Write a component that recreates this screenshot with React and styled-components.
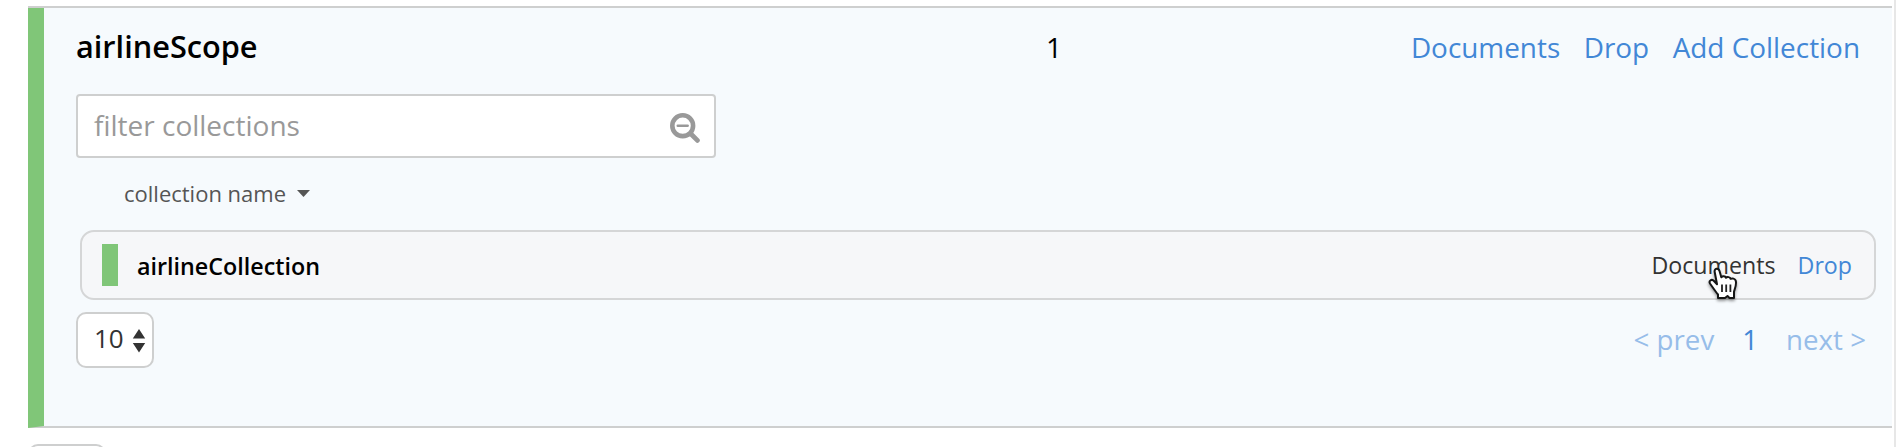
import React from "react";
import styled, { createGlobalStyle } from "styled-components";

const GlobalStyle = createGlobalStyle`
  * { box-sizing: border-box; }
  body {
    margin: 0;
    background: #fff;
    overflow: hidden;
    color: #000;
    font-family: "Open Sans", "Noto Sans", sans-serif;
  }
`;

const Page = styled.main`
  height: 447px;
  padding: 6px 2px 0 28px;
  border-right: 2px solid #e7e7e7;
  overflow: hidden;
`;

const ScopeFrame = styled.section`
  border-top: 2px solid #cecfcf;
`;

const ScopePanel = styled.div`
  height: 420px;
  padding: 0 16px 0 32px;
  background: #f6fafd;
  border-left: 16px solid #80c678;
  border-bottom: 2px solid #cecfcf;
`;

const ScopeHeader = styled.header`
  display: flex;
  align-items: baseline;
  height: 86px;
  padding: 18px 16px 0 0;
`;

const ScopeName = styled.h2`
  width: 970px;
  margin: 0;
  font-size: 30.7px;
  line-height: 40px;
  font-weight: 600;
`;

const ScopeCount = styled.span`
  font-size: 28px;
  line-height: 40px;
`;

const Actions = styled.nav`
  display: flex;
  gap: ${(p) => p.$gap}px;
  margin-left: auto;
`;

const Action = styled.a`
  color: ${(p) => (p.$active ? "#333" : "#4287d6")};
  font-size: ${(p) => p.$size}px;
  line-height: 40px;
  white-space: nowrap;
`;

const FilterBox = styled.label`
  display: flex;
  align-items: center;
  justify-content: space-between;
  width: 640px;
  height: 64px;
  padding: 0 14px 0 16px;
  background: #fff;
  border: 2px solid #cecfcf;
  border-radius: 4px;

  svg {
    margin-top: 3px;
  }
`;

const FilterText = styled.span`
  padding-bottom: 2px;
  color: #999;
  font-size: 28px;
  line-height: 40px;
`;

const ColumnHeading = styled.div`
  display: flex;
  align-items: center;
  gap: 11px;
  height: 72px;
  padding: 0 0 2px 48px;
  color: #555;
  font-size: 22px;
  line-height: 30px;
`;

const CollectionRow = styled.div`
  display: flex;
  align-items: center;
  height: 70px;
  margin-left: 4px;
  padding: 0 22px 0 20px;
  background: #f6f7f9;
  border: 2px solid #d5d6d7;
  border-radius: 14px;
`;

const StatusBar = styled.span`
  width: 16px;
  height: 42px;
  margin-right: 19px;
  background: #80c678;
`;

const CollectionName = styled.span`
  padding-top: 2px;
  font-size: 23.3px;
  line-height: 34px;
  font-weight: 600;
`;

const Hovered = styled.span`
  position: relative;
  display: flex;
`;

const Pointer = styled.svg`
  position: absolute;
  left: 57px;
  top: 22px;
  overflow: visible;
  filter: drop-shadow(0 2px 1.5px rgba(0, 0, 0, 0.4));
`;

const Footer = styled.footer`
  display: flex;
  align-items: center;
  height: 56px;
  margin-top: 12px;
`;

const SizeSelect = styled.div`
  display: flex;
  align-items: center;
  gap: 8px;
  width: 78px;
  height: 56px;
  padding: 0 0 4px 16px;
  background: #fff;
  border: 2px solid #cecfcf;
  border-radius: 10px;
  color: #333;
  font-size: 26px;
  line-height: 36px;

  svg {
    margin-top: 5px;
  }
`;

const Pager = styled.nav`
  display: flex;
  gap: 28px;
  margin-left: auto;
  padding: 0 10px 2px 0;
`;

const PageLink = styled.a`
  color: ${(p) => (p.$current ? "#4287d6" : "#97bde9")};
  font-size: 27.7px;
  line-height: 40px;
`;

const OuterFooter = styled.div`
  padding-top: 16px;
`;

function ZoomOutIcon() {
  return (
    <svg width="30" height="30" viewBox="0 0 30 30" fill="none" stroke="#999" strokeLinecap="round">
      <circle cx="12.7" cy="12.7" r="10.4" strokeWidth="4.6" />
      <path d="M7.7 12.8h10" strokeWidth="2.4" />
      <path d="M21 21l6.4 6.4" strokeWidth="4.8" />
    </svg>
  );
}

function SortArrow() {
  return (
    <svg width="13" height="7" viewBox="0 0 13 7">
      <path d="M0 0h13L6.5 7z" fill="#555" />
    </svg>
  );
}

function Stepper() {
  return (
    <svg width="14" height="24" viewBox="0 0 14 24">
      <path d="M7 0l6.2 9.500h-12.400zM.8 14h12.400L7 23.500z" fill="#333" />
    </svg>
  );
}

function HandPointer() {
  return (
    <Pointer width="32" height="34" viewBox="0 0 32 34">
      <path
        d="M8.500 14.500 6.700 5C6 1.200 10.500.5 11.500 4l1.800 6.300c1.200-1.500 3.900-1.300 4.700.5 1.300-1.300 3.900-.8 4.600 1 1.600-.9 4.300-.2 5 1.600C29 16.800 27 21.500 26 24.500V31h-4.500l-2-2-2.500 2h-7v-3.500C7.500 24.500 4.500 20 2 16.500.5 13.800 3.400 12 5.500 13.500L9 17.300z"
        fill="#fff"
        stroke="#151515"
        strokeWidth="2"
        strokeLinejoin="round"
      />
      <path d="M14 17.500v7.500M18.200 17.500v7.500M22.400 17.500v7.500" stroke="#222" strokeWidth="1.800" />
    </Pointer>
  );
}

export default function App() {
  return (
    <>
      <GlobalStyle />
      <Page>
        <ScopeFrame>
          <ScopePanel>
            <ScopeHeader>
              <ScopeName>airlineScope</ScopeName>
              <ScopeCount>1</ScopeCount>
              <Actions $gap={23.5}>
                <Action $size={27.9}>Documents</Action>
                <Action $size={27.9}>Drop</Action>
                <Action $size={27.9}>Add Collection</Action>
              </Actions>
            </ScopeHeader>
            <FilterBox>
              <FilterText>filter collections</FilterText>
              <ZoomOutIcon />
            </FilterBox>
            <ColumnHeading>
              collection name
              <SortArrow />
            </ColumnHeading>
            <CollectionRow>
              <StatusBar />
              <CollectionName>airlineCollection</CollectionName>
              <Actions $gap={22}>
                <Hovered>
                  <Action $size={23.2} $active>Documents</Action>
                  <HandPointer />
                </Hovered>
                <Action $size={23.2}>Drop</Action>
              </Actions>
            </CollectionRow>
            <Footer>
              <SizeSelect>
                10
                <Stepper />
              </SizeSelect>
              <Pager>
                <PageLink>&lt; prev</PageLink>
                <PageLink $current>1</PageLink>
                <PageLink>next &gt;</PageLink>
              </Pager>
            </Footer>
          </ScopePanel>
        </ScopeFrame>
        <OuterFooter>
          <SizeSelect />
        </OuterFooter>
      </Page>
    </>
  );
}
